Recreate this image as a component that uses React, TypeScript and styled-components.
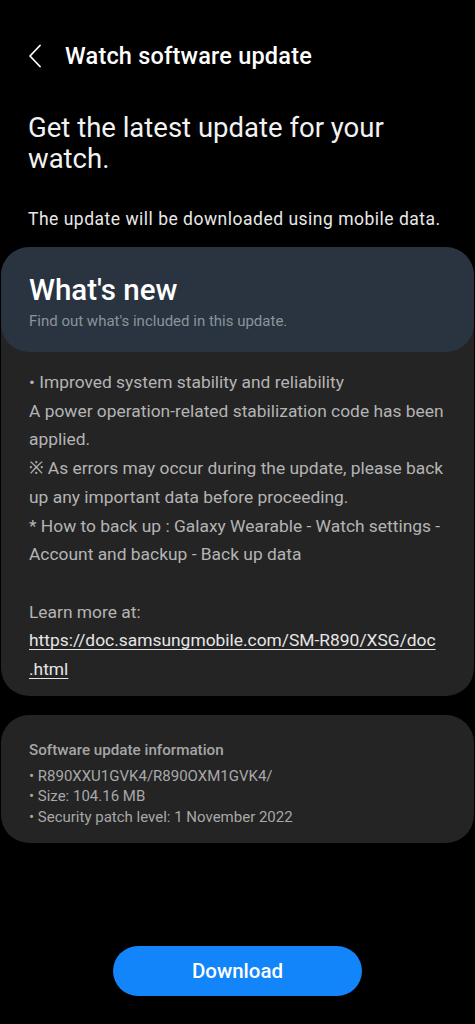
import styled, { createGlobalStyle } from 'styled-components';

const GlobalStyle = createGlobalStyle`
  html, body {
    margin: 0;
    padding: 0;
    background: #000;
  }
  body {
    font-family: Roboto, "Noto Sans", sans-serif;
    -webkit-font-smoothing: antialiased;
  }
`;

const Screen = styled.div`
  width: 475px;
  min-height: 1024px;
  background: #000;
  color: #fff;
  display: flex;
  flex-direction: column;
  box-sizing: border-box;
`;

const TopBar = styled.div`
  display: flex;
  align-items: center;
  height: 56px;
  margin-top: 28px;
  padding-left: 28px;
  gap: 21px;
`;

const BackButton = styled.button`
  background: none;
  border: 0;
  padding: 0;
  width: 16px;
  height: 24px;
  display: flex;
  align-items: center;
  color: #fff;
`;

const Title = styled.h1`
  margin: 0;
  font-size: 23.5px;
  font-weight: 500;
  letter-spacing: 0.2px;
`;

const Intro = styled.div`
  padding: 28px 28px 0;
`;

const Headline = styled.h2`
  margin: 0;
  font-size: 27.5px;
  font-weight: 400;
  line-height: 31px;
  color: #f2f2f2;
`;

const Note = styled.p`
  margin: 34px 0 0;
  font-size: 17.5px;
  letter-spacing: 0.5px;
  line-height: 22px;
  color: #e8e8e8;
`;

const Card = styled.section<{ $top?: number }>`
  margin: ${(p) => p.$top ?? 0}px 1px 0;
  background: #242424;
  border-radius: 28px;
  overflow: hidden;
`;

const CardHeader = styled.div`
  background: #2a3440;
  border-radius: 28px;
  padding: 25px 28px 22px;
`;

const CardTitle = styled.h3`
  margin: 0;
  font-size: 29.5px;
  font-weight: 500;
  line-height: 36px;
  color: #fff;
`;

const CardSubtitle = styled.p`
  margin: 4px 0 0;
  font-size: 15px;
  line-height: 18px;
  color: #8b939b;
`;

const CardBody = styled.div`
  padding: 16px 28px 12px;
  font-size: 17.4px;
  line-height: 28.7px;
  color: #b4b4b4;
`;

const Line = styled.div<{ $gap?: boolean }>`
  margin-top: ${(p) => (p.$gap ? '28.7px' : '0')};
`;

const DocLink = styled.a`
  color: #e6e6e6;
  text-decoration: underline;
  text-underline-offset: 3px;
`;

const InfoBody = styled.div`
  padding: 24px 28px 16px;
  font-size: 15px;
  line-height: 20.5px;
  color: #a8a8a8;
`;

const InfoTitle = styled.h4`
  margin: 0 0 5px;
  font-size: 15.2px;
  font-weight: 500;
  line-height: 22px;
  color: #a6a6a6;
`;

const Footer = styled.div`
  margin-top: auto;
  display: flex;
  justify-content: center;
  padding-bottom: 28px;
`;

const DownloadButton = styled.button`
  width: 249px;
  height: 50px;
  border: 0;
  border-radius: 25px;
  background: #1285fb;
  color: #fff;
  font-family: Roboto, "Noto Sans", sans-serif;
  font-size: 20.5px;
  font-weight: 500;
`;

export default function App() {
  return (
    <>
      <GlobalStyle />
      <Screen>
        <TopBar>
          <BackButton aria-label="Back">
            <svg width="14" height="24" viewBox="0 0 14 24" fill="none">
              <path d="M12 1.5 L2 12 L12 22.5" stroke="#fff" strokeWidth="1.8" strokeLinecap="round" strokeLinejoin="round" />
            </svg>
          </BackButton>
          <Title>Watch software update</Title>
        </TopBar>

        <Intro>
          <Headline>Get the latest update for your watch.</Headline>
          <Note>The update will be downloaded using mobile data.</Note>
        </Intro>

        <Card $top={17}>
          <CardHeader>
            <CardTitle>What's new</CardTitle>
            <CardSubtitle>Find out what's included in this update.</CardSubtitle>
          </CardHeader>
          <CardBody>
            <Line>• Improved system stability and reliability</Line>
            <Line>A power operation-related stabilization code has been applied.</Line>
            <Line>※ As errors may occur during the update, please back up any important data before proceeding.</Line>
            <Line>* How to back up : Galaxy Wearable - Watch settings - Account and backup - Back up data</Line>
            <Line $gap>Learn more at:</Line>
            <Line>
              <DocLink href="#">
                https://doc.samsungmobile.com/SM-R890/XSG/doc<wbr />.html
              </DocLink>
            </Line>
          </CardBody>
        </Card>

        <Card $top={19}>
          <InfoBody>
            <InfoTitle>Software update information</InfoTitle>
            <div>• R890XXU1GVK4/R890OXM1GVK4/</div>
            <div>• Size: 104.16 MB</div>
            <div>• Security patch level: 1 November 2022</div>
          </InfoBody>
        </Card>

        <Footer>
          <DownloadButton>Download</DownloadButton>
        </Footer>
      </Screen>
    </>
  );
}
